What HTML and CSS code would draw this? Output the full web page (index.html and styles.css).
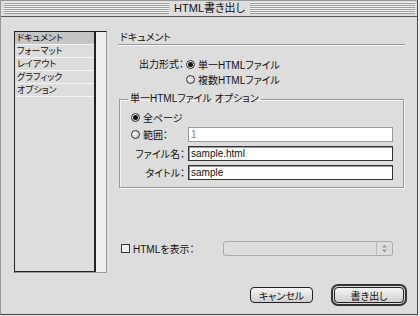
FILE: index.html
```html
<!DOCTYPE html>
<html lang="ja">
<head>
    <meta charset="UTF-8">
    <title>HTML書き出し</title>
    <link rel="stylesheet" href="styles.css">
</head>
<body>

<div class="window">
    <div class="titlebar">
        <div class="stripes"><span class="title">HTML書き出し</span></div>
    </div>

    <div class="main">
        <div class="list-box">
            <ul class="list">
                <li class="selected">ドキュメント</li>
                <li>フォーマット</li>
                <li>レイアウト</li>
                <li>グラフィック</li>
                <li>オプション</li>
            </ul>
            <div class="scroll"></div>
        </div>

        <div class="panel">
            <div class="section-title">ドキュメント</div>

            <div class="format">
                <span class="label">出力形式：</span>
                <div class="options">
                    <div class="opt"><span class="radio on"></span>単一HTMLファイル</div>
                    <div class="opt"><span class="radio"></span>複数HTMLファイル</div>
                </div>
            </div>

            <fieldset class="group">
                <legend>単一HTMLファイル オプション</legend>
                <div class="grid">
                    <div class="opt wide"><span class="radio on"></span>全ページ</div>
                    <div class="opt"><span class="radio"></span>範囲：</div>
                    <input class="field" type="text" value="1" disabled>
                    <label class="field-label" for="file-name">ファイル名：</label>
                    <input class="field" id="file-name" type="text" value="sample.html">
                    <label class="field-label" for="doc-title">タイトル：</label>
                    <input class="field" id="doc-title" type="text" value="sample">
                </div>
            </fieldset>

            <div class="show-row">
                <span class="check"></span>
                <span class="show-label">HTMLを表示：</span>
                <div class="popup">
                    <span class="popup-arrow">
                        <svg width="7" height="9" viewBox="0 0 7 9"><path d="M3.5 0.5 L6 3.5 H1 Z M3.5 8.5 L6 5.5 H1 Z" fill="#999"/></svg>
                    </span>
                </div>
            </div>
        </div>
    </div>

    <div class="buttons">
        <button class="btn">キャンセル</button>
        <button class="btn btn-default">書き出し</button>
    </div>
</div>

</body>
</html>
```

FILE: styles.css
```css
/* Mac OS 9 風のダイアログ */
body { margin: 0; background: #eeeeee; font-family: "Liberation Sans", "Noto Sans CJK JP", sans-serif; font-size: 10px; color: #111; font-feature-settings: "palt"; }
.window { width: 418px; height: 315px; box-sizing: border-box; background: #dddddd; border: 1px solid #444; border-left-color: #999; border-top-color: #999; }

.titlebar { height: 16px; box-sizing: border-box; padding: 1px 2px 2px 3px; border-bottom: 1px solid #555; }
.stripes { height: 100%; display: flex; justify-content: center; background: repeating-linear-gradient(#f2f2f2 0 1px, #9a9a9a 1px 2px); }
.title { background: #dddddd; padding: 0 5px; font-size: 11px; line-height: 12px; }

.main { display: flex; align-items: flex-start; gap: 11px; padding: 14px 12px 0 13px; }

.list-box { width: 93px; height: 242px; box-sizing: border-box; display: flex; border: 1px solid #222; border-right-color: #999; border-bottom-color: #999; }
.list { flex: 1; margin: 0; padding: 0; list-style: none; border-right: 2px solid #222; border-bottom: 1px solid #222; }
.list li { height: 12px; line-height: 12px; padding-left: 2px; font-size: 9px; border-bottom: 1px solid #f4f4f4; }
.list li.selected { background: #c4c4c4; }
.scroll { width: 10px; background: #efefef; }

.panel { flex: 1; padding-top: 1px; }
.section-title { line-height: 12px; padding-left: 2px; border-bottom: 1px solid #999; box-shadow: 0 1px 0 #f6f6f6; }

.format { display: flex; margin-top: 12px; }
.format .label { width: 66px; text-align: right; line-height: 15px; }
.options { margin-left: 2px; }
.opt { display: flex; align-items: center; height: 15px; }

.radio { width: 9px; height: 9px; box-sizing: border-box; border: 1px solid #333; border-radius: 50%; margin-right: 3px; background: radial-gradient(circle at 35% 35%, #fff, #bbb); display: flex; align-items: center; justify-content: center; }
.radio.on::after { content: ""; width: 5px; height: 5px; border-radius: 50%; background: #111; }

.group { margin: 6px 1px 0; padding: 7px 10px 7px 11px; border: 1px solid #999; box-shadow: inset 1px 1px 0 #f6f6f6, 1px 1px 0 #f6f6f6; }
.group legend { padding: 0 2px; margin-left: -3px; line-height: 12px; }
.grid { display: grid; grid-template-columns: 57px 205px; grid-template-rows: 11px 15px 15px 15px; row-gap: 4px; align-items: center; }
.grid .wide { grid-column: 1 / 3; height: 11px; }
.field-label { text-align: right; padding-right: 3px; }
.field { height: 15px; box-sizing: border-box; margin: 0; padding: 0 2px; border: 1px solid #333; box-shadow: inset 1px 1px 0 #999; background: #fff; font-family: "Liberation Sans", sans-serif; font-size: 10px; color: #111; }
.field:disabled { border-color: #999; box-shadow: none; color: #888; background: #fff; }

.show-row { display: flex; align-items: center; margin-top: 53px; height: 15px; }
.check { width: 9px; height: 9px; box-sizing: border-box; border: 1px solid #333; background: #f0f0f0; margin-left: 3px; margin-right: 3px; }
.popup { margin-left: auto; margin-right: 12px; width: 170px; height: 15px; box-sizing: border-box; border: 1px solid #aaa; border-radius: 3px; display: flex; justify-content: flex-end; }
.popup-arrow { width: 15px; border-left: 1px solid #bbb; display: flex; align-items: center; justify-content: center; }

.buttons { display: flex; justify-content: flex-end; gap: 21px; margin-top: 14px; padding-right: 13px; }
.btn { height: 16px; width: 63px; padding: 0; border: 1px solid #222; border-radius: 4px; background: linear-gradient(#f4f4f4, #d0d0d0); font-family: "Liberation Sans", "Noto Sans CJK JP", sans-serif; font-size: 10px; font-feature-settings: "palt"; color: #111; }
.btn-default { width: 70px; box-shadow: 0 0 0 1px #dddddd, 0 0 0 3px #333; }
```
